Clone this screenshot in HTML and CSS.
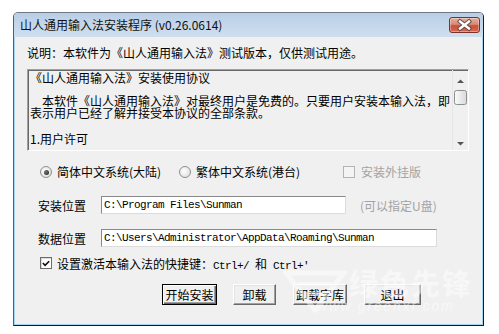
FILE: index.html
```html
<!DOCTYPE html>
<html lang="zh-CN">
<head>
    <meta charset="UTF-8">
    <title>山人通用输入法安装程序 (v0.26.0614)</title>
    <link rel="stylesheet" href="styles.css">
</head>
<body>
    <div class="window">
        <div class="titlebar">
            <span class="title">山人通用输入法安装程序 (v0.26.0614)</span>
            <div class="close-btn">
                <svg width="29" height="14" viewBox="0 0 29 14">
                    <path d="M10 3.5 L19 10.5 M19 3.5 L10 10.5" stroke="#5a4a48" stroke-width="4.2" stroke-linecap="square"/>
                    <path d="M10 3.5 L19 10.5 M19 3.5 L10 10.5" stroke="#fff" stroke-width="2.4" stroke-linecap="square"/>
                </svg>
            </div>
        </div>

        <div class="client">
            <p class="desc">说明：本软件为《山人通用输入法》测试版本，仅供测试用途。</p>

            <div class="license">
                <div class="license-text">
                    <p>《山人通用输入法》安装使用协议</p>
                    <p class="para">　本软件《山人通用输入法》对最终用户是免费的。只要用户安装本输入法，即<br>表示用户已经了解并接受本协议的全部条款。</p>
                    <p class="item">1.用户许可</p>
                </div>
                <div class="scrollbar">
                    <svg width="15" height="80" viewBox="0 0 15 80">
                        <path d="M4 12 L7.5 8.5 L11 12 Z" fill="#555"/>
                        <rect x="1.5" y="19.5" width="12" height="14" rx="2" fill="url(#thumb)" stroke="#8e8f8f"/>
                        <path d="M4 71 L7.5 74.5 L11 71 Z" fill="#555"/>
                        <defs>
                            <linearGradient id="thumb" x1="0" x2="1" y1="0" y2="0">
                                <stop offset="0" stop-color="#fbfbfb"/>
                                <stop offset="1" stop-color="#d9d9d9"/>
                            </linearGradient>
                        </defs>
                    </svg>
                </div>
            </div>

            <div class="options">
                <label class="radio-item first"><span class="radio checked"></span>简体中文系统(大陆)</label>
                <label class="radio-item second"><span class="radio"></span>繁体中文系统(港台)</label>
                <label class="check-item disabled"><span class="checkbox off"></span>安装外挂版</label>
            </div>

            <div class="field-row install">
                <span class="field-label">安装位置</span>
                <div class="text-input short">C:\Program Files\Sunman</div>
                <span class="hint">(可以指定U盘)</span>
            </div>

            <div class="field-row data">
                <span class="field-label">数据位置</span>
                <div class="text-input long">C:\Users\Administrator\AppData\Roaming\Sunman</div>
            </div>

            <div class="hotkey-row">
                <span class="checkbox on">
                    <svg width="11" height="11" viewBox="0 0 11 11">
                        <path d="M2 5 L4.5 7.5 L9 3" fill="none" stroke="#111" stroke-width="1.8"/>
                    </svg>
                </span>
                <span>设置激活本输入法的快捷键：<span class="mono">Ctrl+/ </span>和<span class="mono"> Ctrl+'</span></span>
            </div>

            <div class="buttons">
                <div class="btn default w55">开始安装</div>
                <div class="btn w43">卸载</div>
                <div class="btn w54">卸载字库</div>
                <div class="btn w57">退出</div>
            </div>
        </div>

        <div class="watermark">
            <svg class="wm-logo" width="64" height="44" viewBox="0 0 64 44">
                <path d="M3 4 L61 4 L32 41 Z" fill="none" stroke="#fff" stroke-width="5"/>
                <path d="M15 15 L49 15 M21 25 L43 25" stroke="#fff" stroke-width="4"/>
            </svg>
            <div class="wm-text">
                <span class="wm-big">绿色先锋</span>
                <span class="wm-url">www.greenxf.com</span>
            </div>
        </div>
    </div>
</body>
</html>
```

FILE: styles.css
```css
* {
    box-sizing: border-box;
}
body {
    margin: 0;
    background: #fff;
    font-family: "Noto Sans CJK SC", "Noto Sans", sans-serif;
    font-size: 12px;
    color: #000;
}
p {
    margin: 0;
}
.window {
    position: relative;
    margin: 12px 0 0 13px;
    width: 471px;
    height: 314px;
    border: 1px solid #1a1a1a;
    border-top-color: #6f7a86;
    border-left-color: #5c5c5c;
    border-radius: 5px 5px 0 0;
    background: #f0f0f0;
    display: flex;
    flex-direction: column;
    overflow: hidden;
}
.titlebar {
    height: 24px;
    flex: none;
    display: flex;
    align-items: center;
    justify-content: space-between;
    padding: 0 3px 0 6px;
    background: linear-gradient(#b9cee6, #cfdfef);
}
.title {
    line-height: 14px;
    color: #111;
}
.close-btn {
    width: 31px;
    height: 16px;
    border: 1px solid #7c3326;
    border-radius: 3px;
    background: linear-gradient(#e6ae9f 0%, #d98a76 45%, #c8503a 55%, #d46a52 100%);
    box-shadow: inset 0 0 0 1px rgba(255, 255, 255, 0.35);
    display: flex;
    align-items: center;
    justify-content: center;
}
.client {
    flex: 1;
    display: flex;
    flex-direction: column;
    border: 1px solid #a6d3ee;
    border-top: none;
    padding-top: 10px;
}
.desc {
    margin-left: 12px;
    line-height: 12px;
    white-space: nowrap;
}
.license {
    margin: 10px 0 0 12px;
    width: 442px;
    height: 82px;
    flex: none;
    display: flex;
    border: 1px solid;
    border-color: #a0a0a0 #fff #fff #a0a0a0;
    box-shadow: inset 1px 1px #696969;
}
.license-text {
    flex: 1;
    padding: 2px 0 0 2px;
    white-space: nowrap;
    overflow: hidden;
}
.license-text p {
    line-height: 12px;
}
.license-text .para {
    margin-top: 11px;
    line-height: 12px;
}
.license-text .item {
    margin-top: 14px;
}
.scrollbar {
    width: 16px;
    flex: none;
    padding-top: 1px;
    border-left: 1px solid #e6e6e6;
}
.options {
    margin-top: 14px;
    height: 14px;
    display: flex;
    align-items: center;
    padding-left: 25px;
}
.radio-item,
.check-item {
    display: flex;
    align-items: center;
    gap: 5px;
    line-height: 14px;
}
.radio-item.first {
    width: 139px;
}
.radio-item.second {
    width: 164px;
}
.radio {
    width: 12px;
    height: 12px;
    border-radius: 50%;
    border: 1px solid #8e8f8f;
    background: radial-gradient(circle at 40% 40%, #fff, #d8d8d8);
    position: relative;
}
.radio.checked::after {
    content: "";
    position: absolute;
    left: 2.5px;
    top: 2.5px;
    width: 5px;
    height: 5px;
    border-radius: 50%;
    background: radial-gradient(circle at 35% 35%, #777, #1c1c1c);
}
.checkbox {
    width: 12px;
    height: 12px;
    flex: none;
    display: flex;
    align-items: center;
    justify-content: center;
}
.checkbox.off {
    border: 1px solid #b4b4b4;
    background: #f4f4f4;
}
.checkbox.on {
    border: 1px solid #6c6c6c;
    background: #fff;
    box-shadow: inset 1px 1px #dcdcdc;
}
.check-item.disabled {
    color: #a3a3a3;
    gap: 6px;
}
.field-row {
    height: 18px;
    display: flex;
    align-items: center;
    padding-left: 23px;
}
.field-row.install {
    margin-top: 17px;
}
.field-row.data {
    margin-top: 15px;
}
.field-label {
    width: 48px;
    margin-right: 15px;
    white-space: nowrap;
}
.text-input {
    height: 18px;
    padding: 0 2px;
    background: #fff;
    border: 1px solid;
    border-color: #8a8a8a #dcdcdc #dcdcdc #8a8a8a;
    font-family: "Liberation Mono", monospace;
    font-size: 11px;
    letter-spacing: -0.6px;
    line-height: 16px;
    white-space: nowrap;
}
.text-input.short {
    width: 245px;
}
.text-input.long {
    width: 336px;
}
.hint {
    margin-left: 14px;
    color: #a3a3a3;
    white-space: nowrap;
}
.hotkey-row {
    margin-top: 9px;
    height: 14px;
    display: flex;
    align-items: center;
    gap: 5px;
    padding-left: 25px;
    white-space: nowrap;
}
.mono {
    font-family: "Liberation Mono", monospace;
    font-size: 11px;
    letter-spacing: -0.6px;
    white-space: pre;
}
.buttons {
    margin-top: 14px;
    display: flex;
    gap: 16px;
    padding-left: 147px;
}
.btn {
    height: 21px;
    display: flex;
    align-items: center;
    justify-content: center;
    background: #f0f0f0;
    border: 1px solid;
    border-color: #fff #696969 #696969 #fff;
    box-shadow: inset -1px -1px #a0a0a0, inset 1px 1px #e3e3e3;
}
.btn.default {
    border-color: #000;
    box-shadow: inset 1px 1px #fff, inset -1px -1px #696969, inset -2px -2px #a0a0a0;
}
.w55 { width: 55px; }
.w43 { width: 43px; }
.w54 { width: 54px; margin-left: 1px; }
.w57 { width: 57px; margin-left: 1px; }
.watermark {
    position: absolute;
    left: 269px;
    top: 252px;
    display: flex;
    align-items: flex-start;
    opacity: 0.5;
    pointer-events: none;
    white-space: nowrap;
}
.wm-logo {
    margin-top: 4px;
}
.wm-text {
    display: flex;
    flex-direction: column;
    margin-left: 2px;
}
.wm-big {
    color: #fff;
    font-size: 29px;
    font-weight: 700;
    line-height: 34px;
    letter-spacing: 2px;
}
.wm-url {
    color: #fff;
    font-family: "Liberation Sans", sans-serif;
    font-style: italic;
    font-size: 14px;
    letter-spacing: 1.8px;
    line-height: 14px;
    margin-left: -32px;
}
```
